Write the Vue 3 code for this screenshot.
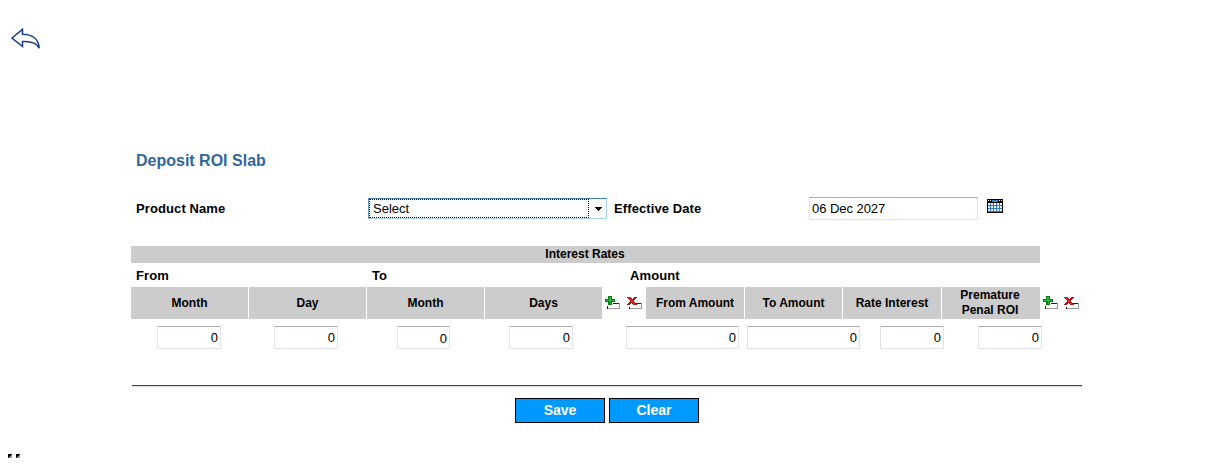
<script setup>
import { ref } from 'vue'

const date = ref('06 Dec 2027')
const periodHeads = ['Month', 'Day', 'Month', 'Days']
const amountHeads = ['From Amount', 'To Amount', 'Rate Interest', 'Premature Penal ROI']
const fields = ref([
  { id: 'from-month', value: '0' },
  { id: 'from-day', value: '0' },
  { id: 'to-month', value: '0' },
  { id: 'to-days', value: '0' },
  { id: 'from-amount', value: '0' },
  { id: 'to-amount', value: '0' },
  { id: 'rate', value: '0' },
  { id: 'penal', value: '0' }
])
const dayCells = [0, 1, 2, 3, 4].flatMap(c => [0, 1, 2].map(r => ({ x: 1 + c * 3, y: 4 + r * 3 })))
</script>

<template>
  <div class="page">
    <svg class="back" width="30" height="22" viewBox="0 0 30 22">
      <path d="M1 10 11.5 1.3V6.3C20 6.6 27.5 9 28.2 20.2 25.5 14.5 20 13.2 11.5 13.6V18.5Z" fill="#fff" stroke="#1b3d8a" stroke-width="1.5" />
    </svg>

    <main class="form">
      <h1>Deposit ROI Slab</h1>

      <div class="product">
        <label class="product-label">Product Name</label>
        <div class="select">
          <span class="select-value">Select</span>
          <svg width="17" height="19" viewBox="0 0 17 19"><path d="M6 8h7v1h-1v1h-1v1h-1v1H9v-1H8v-1H7V9H6z" fill="#000" /></svg>
        </div>
        <label class="date-label">Effective Date</label>
        <input v-model="date" class="box date">
        <svg class="calendar" width="16" height="14" viewBox="0 0 16 14" shape-rendering="crispEdges">
          <path d="M0 0h16v14H0z" fill="#000" />
          <path d="M5 1h6v2H5z" fill="#3b7fc4" />
          <path d="M1 1h1v1H1zM3 1h1v1H3zM12 1h1v1h-1zM14 1h1v1h-1z" fill="#fff" />
          <path d="M1 4h14v9H1z" fill="#3577b8" />
          <rect v-for="(d, i) in dayCells" :key="i" :x="d.x" :y="d.y" width="2" height="2" fill="#e6f0fa" />
        </svg>
      </div>

      <div class="banner">Interest Rates</div>
      <div class="groups"><span>From</span><span>To</span><span>Amount</span></div>

      <div class="heads">
        <div v-for="(h, i) in periodHeads" :key="'p' + i" class="head">{{ h }}</div>
        <div v-for="n in 2" :key="'t' + n" class="tools" :class="'tools-' + n">
          <svg width="15" height="14" viewBox="0 0 15 14" shape-rendering="crispEdges">
            <path d="M8 7h6v1H8z" fill="#222" />
            <path d="M14 7h1v6h-1zM3 12h12v1H3z" fill="#999" />
            <path d="M2 10h1v3H2z" fill="#222" />
            <path d="M3 0h4v3h3v3H7v3H3V6H0V3h3z" fill="#087a18" />
            <path d="M4 1h2v3h3v1H6v3H5V5H1V4h3z" fill="#28b83c" />
          </svg>
          <svg width="15" height="14" viewBox="0 0 15 14" shape-rendering="crispEdges">
            <path d="M9 7h5v1H9z" fill="#222" />
            <path d="M14 7h1v6h-1zM3 12h12v1H3z" fill="#999" />
            <path d="M2 11h1v2H2z" fill="#222" />
            <path d="M0 1h4v1h1v1h1V2h1V1h3v1H9v1H8v1H7v2h1v1h1v1h1v1H6V8H5V7H4v1H3v1H0V8h1V7h1V6h1V4H2V3H1V2H0z" fill="#a41218" />
            <path d="M1 1h2v1h1v1h1v1h1v2h1v1h1v1h1v1H7V8H6V7H5V6H4V4H3V3H2V2H1z" fill="#d82a28" />
          </svg>
        </div>
        <div v-for="h in amountHeads" :key="h" class="head" :class="{ wrap: h.length > 14 }">{{ h }}</div>
      </div>

      <div class="values">
        <input v-for="f in fields" :key="f.id" v-model="f.value" class="box num" :class="f.id">
      </div>

      <div class="rule"></div>
      <div class="actions">
        <button type="button">Save</button>
        <button type="button">Clear</button>
      </div>
    </main>

    <svg class="marks" width="12" height="4" viewBox="0 0 12 4" shape-rendering="crispEdges">
      <g v-for="x in [0, 8]" :key="x">
        <rect :x="x" y="0" width="4" height="4" fill="#999" />
        <path :d="`M${x} 0h4v1h-1v1h-1v1h-1v1h-1z`" fill="#000" />
      </g>
    </svg>
  </div>
</template>

<style>
body {
  background: #fff;
}
</style>

<style scoped>
.page {
  width: 1213px;
  height: 471px;
  overflow: hidden;
  box-sizing: border-box;
  padding-top: 28px;
  font-family: "Liberation Sans", Arial, sans-serif;
  color: #000;
}
.page * {
  box-sizing: border-box;
}
svg {
  display: block;
  flex: none;
}
.back {
  margin-left: 11px;
}
.form {
  width: 952px;
  margin: 101px 0 0 131px;
}
h1 {
  margin: 0 0 26px 5px;
  font-size: 16px;
  line-height: 20px;
  color: #336699;
}
.product {
  display: flex;
  align-items: flex-start;
  height: 49px;
}
.product-label,
.date-label {
  font-size: 13px;
  font-weight: bold;
  line-height: 23px;
  letter-spacing: 0.1px;
  white-space: nowrap;
}
.product-label {
  width: 237px;
  padding-left: 5px;
}
.date-label {
  width: 202px;
  padding-left: 7px;
}
.select {
  display: flex;
  width: 239px;
  height: 21px;
  margin-top: 1px;
  border: 1px solid #a9d1ea;
  border-top-color: #3c7fb1;
  border-left-color: #5a9bcb;
}
.select-value {
  width: 220px;
  height: 19px;
  padding-left: 3px;
  border: 1px dotted #000;
  font-size: 13px;
  line-height: 18px;
}
.box {
  display: block;
  height: 23px;
  margin: 0;
  border: 1px solid #e2e3ea;
  border-top-color: #abadb3;
  border-radius: 1px;
  background: #fff;
  color: #000;
  font-family: inherit;
  font-size: 13px;
  outline: none;
}
.date {
  width: 169px;
  padding: 0 2px;
  letter-spacing: -0.05px;
}
.calendar {
  margin: 2px 0 0 9px;
}
.banner {
  width: 909px;
  height: 17px;
  padding-right: 1px;
  background: #ccc;
  text-align: center;
  font-size: 12px;
  font-weight: bold;
  line-height: 16px;
}
.groups {
  display: grid;
  grid-template-columns: 236px 258px 1fr;
  height: 24px;
  padding-left: 5px;
  font-size: 13px;
  font-weight: bold;
  line-height: 25px;
  letter-spacing: 0.1px;
}
.heads {
  display: grid;
  grid-template-columns: 117px 117px 117px 117px 42px 98px 97px 98px 98px 43px;
  column-gap: 1px;
  height: 32px;
  margin-right: -10px;
}
.head {
  display: flex;
  align-items: center;
  justify-content: center;
  background: #ccc;
  text-align: center;
  font-size: 12px;
  font-weight: bold;
  line-height: 15px;
}
.wrap {
  padding: 0 15px 0 13px;
}
.tools {
  display: flex;
  gap: 7px;
  height: 14px;
  margin-top: 9px;
  padding-left: 2px;
  grid-row: 1;
}
.tools-1 {
  grid-column: 5;
}
.tools-2 {
  grid-column: 10;
  gap: 6px;
}
.values {
  display: flex;
  margin-top: 7px;
  padding-left: 26px;
}
.num {
  width: 64px;
  padding: 0 2px;
  text-align: right;
}
.from-day {
  margin-left: 53px;
}
.to-month {
  width: 53px;
  margin-left: 59px;
  padding-top: 2px;
}
.to-days {
  margin-left: 59px;
}
.from-amount {
  width: 113px;
  margin-left: 53px;
}
.to-amount {
  width: 113px;
  margin-left: 8px;
}
.rate {
  margin-left: 20px;
}
.penal {
  margin-left: 34px;
}
.rule {
  width: 950px;
  height: 2px;
  margin: 36px 0 0 1px;
  border-top: 1px solid #444;
  border-bottom: 1px solid #ddd;
}
.actions {
  display: flex;
  gap: 4px;
  margin: 11px 0 0 384px;
}
button {
  width: 90px;
  height: 25px;
  padding: 0 0 1px;
  border: 1px solid #000;
  background: #0099ff;
  color: #fff;
  font: bold 14px "Liberation Sans", Arial, sans-serif;
}
.marks {
  margin: 31px 0 0 8px;
}
</style>
